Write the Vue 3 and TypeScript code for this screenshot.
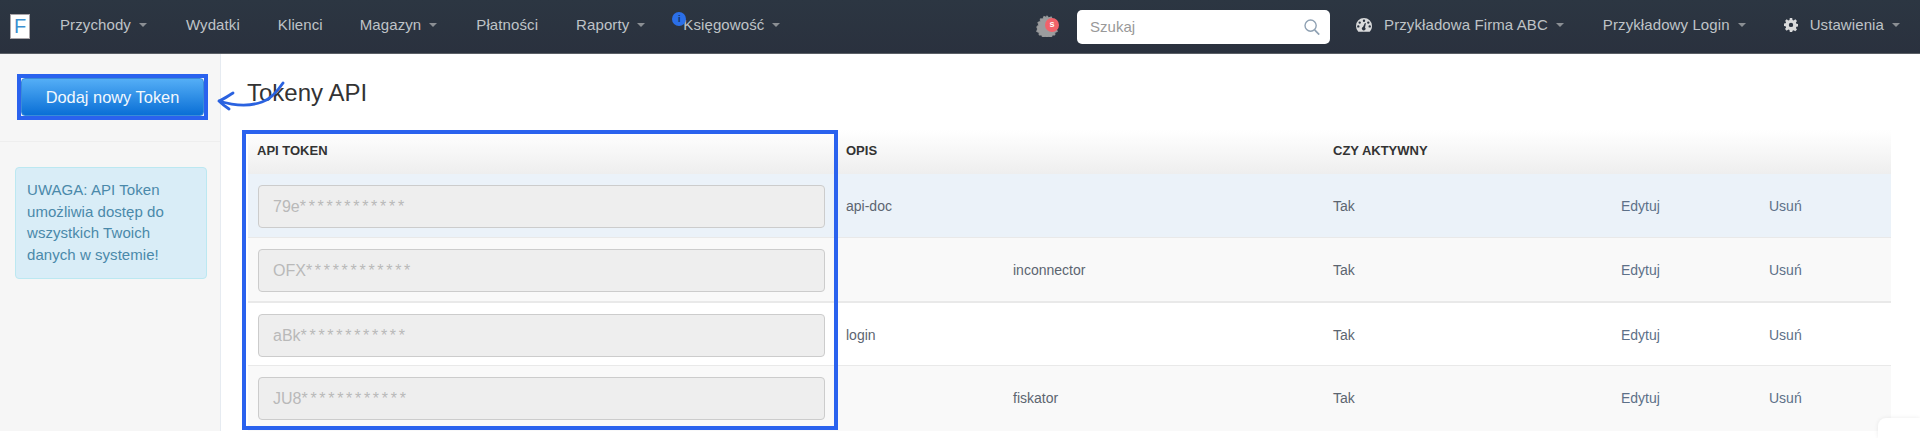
<script setup lang="ts">
interface Row { token: string; opis: string; indented: boolean }
const leftNav = [
  { label: 'Przychody', caret: true, gap: 39 },
  { label: 'Wydatki', caret: false, gap: 38 },
  { label: 'Klienci', caret: false, gap: 37 },
  { label: 'Magazyn', caret: true, gap: 39 },
  { label: 'Płatności', caret: false, gap: 38 },
]
const rows: Row[] = [
  { token: '79e', opis: 'api-doc', indented: false },
  { token: 'OFX', opis: 'inconnector', indented: true },
  { token: 'aBk', opis: 'login', indented: false },
  { token: 'JU8', opis: 'fiskator', indented: true },
]
const stars = '************'
</script>

<template>
  <div class="page">
    <header class="nav">
      <div class="logo"><span>F</span></div>
      <nav class="links">
        <a v-for="item in leftNav" :key="item.label" class="link" :style="{ marginRight: item.gap + 'px' }">
          {{ item.label }}<i v-if="item.caret" class="caret"></i>
        </a>
        <a class="link raporty">Raporty<i class="caret"></i></a>
        <a class="link ksiegowosc"><b class="info">i</b>Księgowość<i class="caret"></i></a>
      </nav>
      <div class="right">
        <div class="gear">
          <svg class="gear-icon" viewBox="0 0 24 24">
            <path fill="#9b9c9e" stroke="#9b9c9e" stroke-width="1" stroke-linejoin="round" d="M12 .8l2 2.2 2.800-1 .9 2.800 2.900-.1-.1 2.900 2.800.9-1 2.800 2.200 2-2.200 2 1 2.800-2.800.9.1 2.900-2.900-.1-.9 2.800-2.800-1-2 2.200-2-2.200-2.800 1-.9-2.800-2.900.1.1-2.900-2.800-.9 1-2.800L.8 12.800l2.200-2-1-2.800 2.800-.9-.1-2.900 2.900.1.9-2.800 2.800 1z"/>
          </svg>
          <span class="gear-badge">s</span>
        </div>
        <div class="search">
          <span class="placeholder">Szukaj</span>
          <svg class="search-icon" viewBox="0 0 16 16">
            <circle cx="6.6" cy="6.6" r="5.6" fill="none" stroke="#8fa1b3" stroke-width="1.4"/>
            <path d="M10.6 10.8L15.2 15.6" fill="none" stroke="#8fa1b3" stroke-width="1.7"/>
          </svg>
        </div>
        <a class="link company">
          <svg class="gauge" viewBox="0 0 16 14">
            <path fill="#d9dadb" fill-rule="evenodd" d="M8 0a8 8 0 0 1 8 8c0 2.300-.9 4.400-2.300 5.700H2.300A8 8 0 0 1 0 8a8 8 0 0 1 8-8zM8 1.600a1.200 1.200 0 1 0 0 2.400 1.200 1.200 0 0 0 0-2.400zM3.700 3.400a1.200 1.200 0 1 0 0 2.400 1.200 1.200 0 0 0 0-2.400zM12.300 3.400a1.200 1.200 0 1 0 0 2.400 1.200 1.200 0 0 0 0-2.400zM2.300 7.200a1.200 1.200 0 1 0 0 2.400 1.200 1.200 0 0 0 0-2.400zM13.700 7.200a1.200 1.200 0 1 0 0 2.400 1.200 1.200 0 0 0 0-2.400zM8.900 5L7 9a1.800 1.800 0 1 0 2 .4l.9-4.200z"/>
          </svg>
          Przykładowa Firma ABC<i class="caret"></i>
        </a>
        <a class="link login">Przykładowy Login<i class="caret"></i></a>
        <a class="link settings">
          <svg class="cog" viewBox="0 0 14 14">
            <path fill="#d9dadb" fill-rule="evenodd" d="M5.800 0h2.400l.3 1.900 1.200.5L11.300 1.300 13 3l-1.100 1.600.5 1.200 1.900.3v2.400l-1.900.3-.5 1.200 1.100 1.600-1.700 1.700-1.600-1.100-1.200.5L8.200 14H5.800l-.3-1.900-1.200-.5L2.700 12.700 1 11l1.100-1.600-.5-1.200L0 7.900V5.500l1.600-.3.5-1.200L1 3l1.700-1.700 1.600 1.100 1.200-.5zM7 4.700a2.200 2.200 0 1 0 0 4.400 2.200 2.200 0 0 0 0-4.400z"/>
          </svg>
          Ustawienia<i class="caret"></i>
        </a>
      </div>
    </header>

    <div class="body">
      <aside class="sidebar">
        <div class="add-area">
          <div class="mark-button"><button class="add">Dodaj nowy Token</button></div>
        </div>
        <div class="alert">UWAGA: API Token umożliwia dostęp do wszystkich Twoich danych w systemie!</div>
      </aside>

      <main class="main">
        <h1 class="title">Tokeny API</h1>
        <svg class="arrow" viewBox="0 0 80 36">
          <path d="M68 3C62 12 56 19 47 22C36 26 20 26 4 21M18 13C13 16 9 19 4 21C7 24 11 27 14 29" fill="none" stroke="#2a62e0" stroke-width="2.800" stroke-linecap="round" stroke-linejoin="round"/>
        </svg>
        <section class="table">
          <div class="thead">
            <div class="th first">API TOKEN</div>
            <div class="th">OPIS</div>
            <div class="th">CZY AKTYWNY</div>
            <div></div>
            <div></div>
          </div>
          <div v-for="row in rows" :key="row.token" class="tr">
            <div class="td first">
              <div class="token"><span>{{ row.token }}</span><span class="stars">{{ stars }}</span></div>
            </div>
            <div class="td" :class="{ indented: row.indented }">{{ row.opis }}</div>
            <div class="td">Tak</div>
            <div class="td action">Edytuj</div>
            <div class="td action">Usuń</div>
          </div>
          <div class="mark-table"></div>
        </section>
      </main>
    </div>
    <div class="corner"></div>
  </div>
</template>

<style>
html, body { margin: 0; background: #fff; }
</style>

<style scoped>
* { box-sizing: border-box; }
.page {
  position: relative;
  width: 1920px;
  height: 438px;
  overflow: hidden;
  font: 15px/21px "Liberation Sans", Arial, sans-serif;
  color: #555;
  background: #fff;
}
.nav {
  height: 54px;
  display: flex;
  align-items: center;
  background: linear-gradient(#2c3642, #2a313e);
  border-bottom: 1px solid #5a5f66;
  padding: 0 0 4px 10px;
}
.logo {
  width: 20px;
  height: 25px;
  margin: 4px 30px 0 0;
  background: #fff;
  border: 1px solid #a9a4a8;
  font-size: 20px;
  line-height: 22px;
  text-align: center;
  color: #3b8fd0;
}
.links { display: flex; align-items: center; }
.link {
  display: inline-flex;
  align-items: center;
  color: #bfc3c7;
  white-space: nowrap;
  letter-spacing: .1px;
}
.caret {
  display: inline-block;
  width: 0;
  height: 0;
  margin-left: 8px;
  margin-top: 1px;
  border-left: 4px solid transparent;
  border-right: 4px solid transparent;
  border-top: 4px solid #8b8f94;
}
.raporty { margin-right: 38px; }
.ksiegowosc { position: relative; }
.info {
  position: absolute;
  left: -11px;
  top: -2px;
  width: 14px;
  height: 14px;
  border-radius: 50%;
  background: #2b6fe8;
  color: #12305f;
  font-size: 9px;
  line-height: 14px;
  text-align: center;
}
.right { margin-left: auto; display: flex; align-items: center; padding-right: 20px; }
.gear { position: relative; width: 23px; height: 22px; margin-right: 18px; margin-top: 3px; }
.gear-icon { position: absolute; left: 0; top: 0; width: 22px; height: 22px; }
.gear-badge {
  position: absolute;
  right: 0;
  top: 3px;
  width: 14px;
  height: 14px;
  border-radius: 50%;
  background: #f1626a;
  color: #fff;
  font-size: 9px;
  font-weight: bold;
  line-height: 13px;
  text-align: center;
}
.search {
  width: 253px;
  height: 34px;
  margin-top: 4px;
  margin-right: 26px;
  display: flex;
  align-items: center;
  justify-content: space-between;
  padding: 0 10px 0 13px;
  background: #fff;
  border-radius: 5px;
}
.placeholder { color: #999; }
.search-icon { width: 16px; height: 16px; }
.gauge { width: 16px; height: 14px; margin-right: 12px; }
.cog { width: 14px; height: 14px; margin-right: 12px; }
.company { margin-right: 39px; }
.login { margin-right: 38px; }
.body { display: flex; height: 377px; }
.sidebar {
  width: 221px;
  background: #f6f6f6;
  border-right: 1px solid #e6ebf1;
  padding: 0;
}
.add-area {
  height: 88px;
  padding: 20px 0 0 17px;
  border-bottom: 1px solid #eeeeee;
}
.mark-button { width: 191px; height: 46px; border: 4px solid #2a62ee; background: #eef3f8; }
.add {
  width: 100%;
  height: 100%;
  padding: 0;
  border: 1px solid #3a8cd8;
  border-radius: 4px;
  background: linear-gradient(#54aef6, #0a6fd6);
  color: #f2f8fd;
  font: 16.400px "Liberation Sans", Arial, sans-serif;
}
.alert {
  margin: 25px 13px 0 15px;
  height: 112px;
  padding: 11px 10px 0 11px;
  background: #d9edf7;
  border: 1px solid #bce8f1;
  border-radius: 4px;
  color: #4a89aa;
  line-height: 21.500px;
  letter-spacing: .05px;
}
.main { position: relative; flex: 1; padding-left: 27px; }
.title {
  margin: 0 0 0 -1px;
  height: 76px;
  padding-top: 24px;
  font-size: 24px;
  font-weight: normal;
  line-height: 30px;
  color: #333;
}
.arrow { position: absolute; left: -6px; top: 26px; width: 80px; height: 36px; }
.table { position: relative; width: 1643px; }
.thead, .tr { display: grid; grid-template-columns: 598px 487px 288px 148px 122px; }
.thead {
  height: 44px;
  background: linear-gradient(#fff, #eeeeee);
  align-items: center;
  padding-bottom: 4px;
}
.th { font-size: 13px; font-weight: bold; color: #333; }
.th.first { padding-left: 9px; }
.tr { height: 64px; align-items: center; border-bottom: 1px solid #e9e9e9; padding-top: 2px; }
.tr:nth-of-type(2) { background: #ebf2f9; }
.tr:nth-of-type(3) { background: #f9f9f9; height: 65px; border-bottom-width: 2px; }
.tr:nth-of-type(4) { background: #fff; height: 63px; }
.tr:nth-of-type(5) { background: #f9f9f9; height: 65px; border-bottom: 0; padding-top: 0; }
.td { font-size: 14px; color: #5c6570; }
.td.first { padding-left: 10px; }
.td.indented { padding-left: 167px; }
.action { color: #5d7088; }
.token {
  width: 567px;
  height: 43px;
  padding-left: 14px;
  background: #eeeeee;
  border: 1px solid #cccccc;
  border-radius: 4px;
  color: #b9b9b9;
  font-size: 16px;
  line-height: 41px;
}
.stars { letter-spacing: 2.700px; }
.mark-table {
  position: absolute;
  left: -6px;
  top: 0;
  width: 596px;
  height: 300px;
  border: 4px solid #2a62ee;
  pointer-events: none;
}
.corner {
  position: absolute;
  right: 0;
  top: 418px;
  width: 42px;
  height: 20px;
  background: #fff;
  border-radius: 8px 0 0 0;
  box-shadow: 0 0 4px rgba(0, 0, 0, .08);
}
</style>
